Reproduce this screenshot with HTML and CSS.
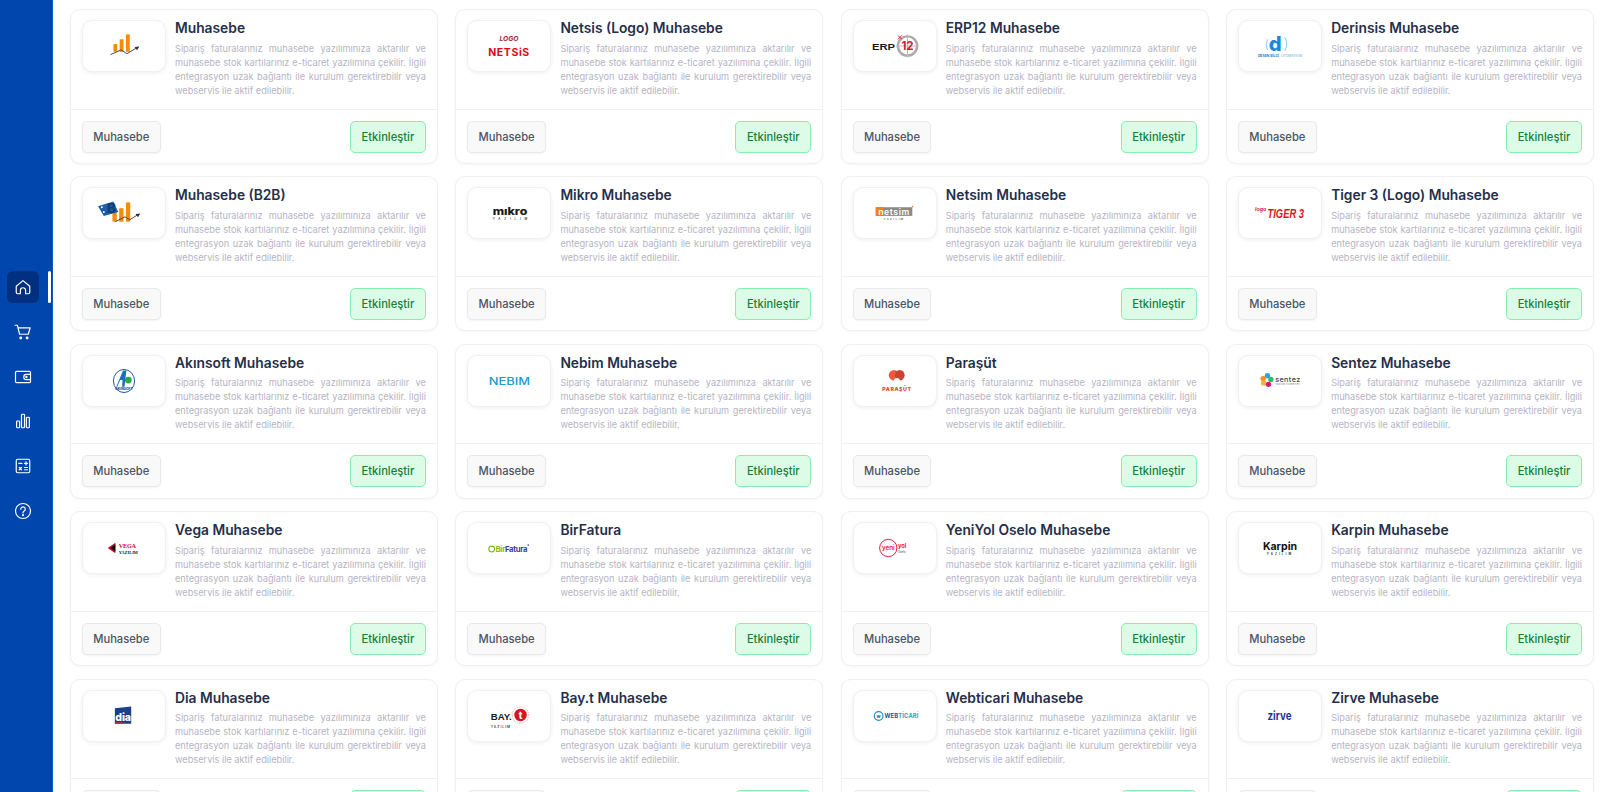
FILE: index.html
```html
<!DOCTYPE html>
<html lang="en">
<head>
    <meta charset="UTF-8">
    <meta name="viewport" content="width=device-width, initial-scale=1.0">
    <title>Entegrasyonlar</title>
    <link rel="stylesheet" href="styles.css">
</head>
<body>
    <aside class="sidebar">
        <a class="nav-item active">
            <svg viewBox="0 0 24 24"><path d="M3 11 12 3.500l9 7.500v8a2 2 0 0 1-2 2h-3.500v-4.500a3.500 3.500 0 0 0-7 0V21H5a2 2 0 0 1-2-2z"/></svg>
        </a>
        <a class="nav-item">
            <svg viewBox="0 0 24 24"><path d="M1.500 3h3l3 12h11.500l2.500-8.500H5.500"/><circle cx="9" cy="20" r="1.100"/><circle cx="17.500" cy="20" r="1.100"/></svg>
        </a>
        <a class="nav-item">
            <svg viewBox="0 0 24 24"><rect x="2" y="4.500" width="20" height="15" rx="1.500"/><path d="M22 8.500h-5.500a3.500 3.500 0 0 0 0 7H22"/><circle cx="16.500" cy="12" r=".8"/></svg>
        </a>
        <a class="nav-item">
            <svg viewBox="0 0 24 24"><rect x="3.500" y="12" width="4" height="9" rx="1"/><rect x="10" y="3" width="4" height="18" rx="1"/><rect x="16.500" y="7" width="4" height="14" rx="1"/></svg>
        </a>
        <a class="nav-item">
            <svg viewBox="0 0 24 24"><rect x="3" y="3" width="18" height="18" rx="2"/><path d="M6.500 8.500h4M14 8.500h4M16 6.500v4M7 14l3 3M10 14l-3 3M14 14h4M14 17h4"/></svg>
        </a>
        <a class="nav-item">
            <svg viewBox="0 0 24 24"><circle cx="12" cy="12" r="10"/><path d="M9 9.500a3 3 0 1 1 4.500 2.600c-1 .6-1.500 1.200-1.500 2.400"/><circle cx="12" cy="17.500" r=".6"/></svg>
        </a>
    </aside>

    <main class="content">
        <div class="card-grid">

            <div class="card">
                <div class="card-body">
                    <div class="logo-box">
                        <svg class="logo" viewBox="0 0 84 52">
                            <rect x="31" y="24" width="4" height="8" fill="#f28c0a"/><rect x="37.500" y="19" width="4" height="13" fill="#f28c0a"/><rect x="44" y="14" width="4" height="18" fill="#f28c0a"/>
                            <path d="M28 35 39 30l6 4 10-6" fill="none" stroke="#444" stroke-width="1"/><path d="M53 27l5-.5-2.500 4z" fill="#333"/>
                        </svg>
                    </div>
                    <div class="info">
                        <h3>Muhasebe</h3>
                        <p>Sipariş faturalarınız muhasebe yazılımınıza aktarılır ve muhasebe stok kartılarınız e-ticaret yazılımına çekilir. İlgili entegrasyon uzak bağlantı ile kurulum gerektirebilir veya webservis ile aktif edilebilir.</p>
                    </div>
                </div>
                <div class="card-foot"><span class="tag">Muhasebe</span><button class="enable">Etkinleştir</button></div>
            </div>

            <div class="card">
                <div class="card-body">
                    <div class="logo-box">
                        <svg class="logo" viewBox="0 0 84 52">
                            <text x="42" y="21" class="lt" font-size="7" font-weight="700" font-style="italic" fill="#a52a3a">LOGO</text>
                            <text x="42" y="36" class="lt" font-size="11" font-weight="700" fill="#e30613" letter-spacing=".6">NETSiS</text>
                        </svg>
                    </div>
                    <div class="info">
                        <h3>Netsis (Logo) Muhasebe</h3>
                        <p>Sipariş faturalarınız muhasebe yazılımınıza aktarılır ve muhasebe stok kartılarınız e-ticaret yazılımına çekilir. İlgili entegrasyon uzak bağlantı ile kurulum gerektirebilir veya webservis ile aktif edilebilir.</p>
                    </div>
                </div>
                <div class="card-foot"><span class="tag">Muhasebe</span><button class="enable">Etkinleştir</button></div>
            </div>

            <div class="card">
                <div class="card-body">
                    <div class="logo-box">
                        <svg class="logo" viewBox="0 0 84 52">
                            <text x="18" y="30.500" font-family="Liberation Sans" font-size="10" font-weight="700" fill="#1a1a1a" textLength="24" lengthAdjust="spacingAndGlyphs">ERP</text>
                            <circle cx="55" cy="26" r="10" fill="none" stroke="#aaa" stroke-width="2.500"/>
                            <path d="M55 14v24M43 26h24" stroke="#bbb" stroke-width="1"/>
                            <text x="55" y="30.500" class="lt" font-size="12" font-weight="700" fill="#d8232a">12</text>
                            <path d="M45 15l4 4M49 15l-4 4" stroke="#d8232a" stroke-width="1"/>
                        </svg>
                    </div>
                    <div class="info">
                        <h3>ERP12 Muhasebe</h3>
                        <p>Sipariş faturalarınız muhasebe yazılımınıza aktarılır ve muhasebe stok kartılarınız e-ticaret yazılımına çekilir. İlgili entegrasyon uzak bağlantı ile kurulum gerektirebilir veya webservis ile aktif edilebilir.</p>
                    </div>
                </div>
                <div class="card-foot"><span class="tag">Muhasebe</span><button class="enable">Etkinleştir</button></div>
            </div>

            <div class="card">
                <div class="card-body">
                    <div class="logo-box">
                        <svg class="logo" viewBox="0 0 84 52">
                            <text x="37" y="31" class="lt" font-size="21" font-weight="800" fill="#1e88d8">d</text>
                            <path d="M29 19a12 12 0 0 0 0 11M47 17a14 14 0 0 1 0 14" fill="none" stroke="#8cc0ea" stroke-width="1"/>
                            <text x="19" y="37" font-family="Inter" font-size="3.500" font-weight="700" fill="#1e78c8" textLength="22">DESEN BİLGİ</text>
                            <text x="43" y="37" font-family="Inter" font-size="3.500" fill="#6aaede" textLength="22">OTOMASYON</text>
                        </svg>
                    </div>
                    <div class="info">
                        <h3>Derinsis Muhasebe</h3>
                        <p>Sipariş faturalarınız muhasebe yazılımınıza aktarılır ve muhasebe stok kartılarınız e-ticaret yazılımına çekilir. İlgili entegrasyon uzak bağlantı ile kurulum gerektirebilir veya webservis ile aktif edilebilir.</p>
                    </div>
                </div>
                <div class="card-foot"><span class="tag">Muhasebe</span><button class="enable">Etkinleştir</button></div>
            </div>

            <div class="card">
                <div class="card-body">
                    <div class="logo-box">
                        <svg class="logo" viewBox="0 0 84 52">
                            <rect x="30" y="25" width="4.500" height="10" fill="#f28c0a"/><rect x="37" y="21" width="4.500" height="14" fill="#f28c0a"/><rect x="44" y="15" width="4.500" height="20" fill="#f28c0a"/>
                            <path d="M15 19l16-5 5 11-15 4z" fill="#1b5fa8"/>
                            <text x="29" y="26" class="lt" font-size="14" font-weight="800" fill="#123f78">B</text>
                            <circle cx="19" cy="20" r="1" fill="#fff"/><circle cx="21" cy="25" r="1" fill="#fff"/>
                            <path d="M33 35 43 30l5 3 8-5" fill="none" stroke="#444" stroke-width="1"/><path d="M54 27l5-.5-2.500 4z" fill="#333"/>
                        </svg>
                    </div>
                    <div class="info">
                        <h3>Muhasebe (B2B)</h3>
                        <p>Sipariş faturalarınız muhasebe yazılımınıza aktarılır ve muhasebe stok kartılarınız e-ticaret yazılımına çekilir. İlgili entegrasyon uzak bağlantı ile kurulum gerektirebilir veya webservis ile aktif edilebilir.</p>
                    </div>
                </div>
                <div class="card-foot"><span class="tag">Muhasebe</span><button class="enable">Etkinleştir</button></div>
            </div>

            <div class="card">
                <div class="card-body">
                    <div class="logo-box">
                        <svg class="logo" viewBox="0 0 84 52">
                            <text x="25" y="28.500" font-family="Inter" font-size="11" font-weight="800" fill="#1a1a1a" textLength="36" lengthAdjust="spacingAndGlyphs">mıkro</text>
                            <text x="25" y="33" font-family="Inter" font-size="3" font-weight="600" fill="#333" textLength="36">YAZILIM</text>
                        </svg>
                    </div>
                    <div class="info">
                        <h3>Mikro Muhasebe</h3>
                        <p>Sipariş faturalarınız muhasebe yazılımınıza aktarılır ve muhasebe stok kartılarınız e-ticaret yazılımına çekilir. İlgili entegrasyon uzak bağlantı ile kurulum gerektirebilir veya webservis ile aktif edilebilir.</p>
                    </div>
                </div>
                <div class="card-foot"><span class="tag">Muhasebe</span><button class="enable">Etkinleştir</button></div>
            </div>

            <div class="card">
                <div class="card-body">
                    <div class="logo-box">
                        <svg class="logo" viewBox="0 0 84 52">
                            <rect x="22" y="20" width="38" height="9" fill="#8a8a8a"/><rect x="22" y="20" width="8" height="9" fill="#f07f1e"/>
                            <text x="41" y="28" class="lt" font-size="9" font-weight="600" fill="#fff" letter-spacing=".6">netsim</text>
                            <rect x="59.500" y="18.500" width="1.500" height="1.500" fill="#f07f1e"/>
                            <text x="41" y="33" class="lt" font-size="2.800" font-weight="600" fill="#555" letter-spacing="1.500">YAZILIM</text>
                        </svg>
                    </div>
                    <div class="info">
                        <h3>Netsim Muhasebe</h3>
                        <p>Sipariş faturalarınız muhasebe yazılımınıza aktarılır ve muhasebe stok kartılarınız e-ticaret yazılımına çekilir. İlgili entegrasyon uzak bağlantı ile kurulum gerektirebilir veya webservis ile aktif edilebilir.</p>
                    </div>
                </div>
                <div class="card-foot"><span class="tag">Muhasebe</span><button class="enable">Etkinleştir</button></div>
            </div>

            <div class="card">
                <div class="card-body">
                    <div class="logo-box">
                        <svg class="logo" viewBox="0 0 84 52">
                            <text x="16" y="24" font-family="Inter" font-size="5.500" font-weight="700" font-style="italic" fill="#d8174f">logo</text>
                            <text x="29" y="31" font-family="Liberation Sans" font-size="12.500" font-weight="700" font-style="italic" fill="#d9142d" textLength="38" lengthAdjust="spacingAndGlyphs">TIGER 3</text>
                        </svg>
                    </div>
                    <div class="info">
                        <h3>Tiger 3 (Logo) Muhasebe</h3>
                        <p>Sipariş faturalarınız muhasebe yazılımınıza aktarılır ve muhasebe stok kartılarınız e-ticaret yazılımına çekilir. İlgili entegrasyon uzak bağlantı ile kurulum gerektirebilir veya webservis ile aktif edilebilir.</p>
                    </div>
                </div>
                <div class="card-foot"><span class="tag">Muhasebe</span><button class="enable">Etkinleştir</button></div>
            </div>

            <div class="card">
                <div class="card-body">
                    <div class="logo-box">
                        <svg class="logo" viewBox="0 0 84 52">
                            <ellipse cx="42" cy="26" rx="11" ry="12" fill="#fff" stroke="#1c4f9c" stroke-width="1"/>
                            <path d="M34 32 41 15h3.500l-2 17h-2.500l.5-7h-2.500l-3 7z" fill="#1c6fb5"/>
                            <circle cx="46.500" cy="25" r="3.500" fill="#2aa84a"/>
                            <text x="42" y="35.500" class="lt" font-size="3.500" font-weight="800" fill="#1c4f9c">AKINSOFT</text>
                        </svg>
                    </div>
                    <div class="info">
                        <h3>Akınsoft Muhasebe</h3>
                        <p>Sipariş faturalarınız muhasebe yazılımınıza aktarılır ve muhasebe stok kartılarınız e-ticaret yazılımına çekilir. İlgili entegrasyon uzak bağlantı ile kurulum gerektirebilir veya webservis ile aktif edilebilir.</p>
                    </div>
                </div>
                <div class="card-foot"><span class="tag">Muhasebe</span><button class="enable">Etkinleştir</button></div>
            </div>

            <div class="card">
                <div class="card-body">
                    <div class="logo-box">
                        <svg class="logo" viewBox="0 0 84 52">
                            <text x="21" y="30" font-family="Inter" font-size="10" font-weight="500" fill="#1b9ad6" textLength="43" lengthAdjust="spacingAndGlyphs">NEBIM</text>
                        </svg>
                    </div>
                    <div class="info">
                        <h3>Nebim Muhasebe</h3>
                        <p>Sipariş faturalarınız muhasebe yazılımınıza aktarılır ve muhasebe stok kartılarınız e-ticaret yazılımına çekilir. İlgili entegrasyon uzak bağlantı ile kurulum gerektirebilir veya webservis ile aktif edilebilir.</p>
                    </div>
                </div>
                <div class="card-foot"><span class="tag">Muhasebe</span><button class="enable">Etkinleştir</button></div>
            </div>

            <div class="card">
                <div class="card-body">
                    <div class="logo-box">
                        <svg class="logo" viewBox="0 0 84 52">
                            <ellipse cx="41" cy="20" rx="5.500" ry="5.500" fill="#ef5a3c"/>
                            <ellipse cx="47" cy="20" rx="5" ry="5.500" fill="#c9452f"/>
                            <path d="M41 26a3 3 0 0 1 6 0z" fill="#fff"/>
                            <text x="44" y="36" class="lt" font-size="5.500" font-weight="800" fill="#d9432f" letter-spacing=".6">PARAŞÜT</text>
                        </svg>
                    </div>
                    <div class="info">
                        <h3>Paraşüt</h3>
                        <p>Sipariş faturalarınız muhasebe yazılımınıza aktarılır ve muhasebe stok kartılarınız e-ticaret yazılımına çekilir. İlgili entegrasyon uzak bağlantı ile kurulum gerektirebilir veya webservis ile aktif edilebilir.</p>
                    </div>
                </div>
                <div class="card-foot"><span class="tag">Muhasebe</span><button class="enable">Etkinleştir</button></div>
            </div>

            <div class="card">
                <div class="card-body">
                    <div class="logo-box">
                        <svg class="logo" viewBox="0 0 84 52">
                            <circle cx="29" cy="20.500" r="2.800" fill="#2aa7c9"/><circle cx="24.500" cy="23.500" r="2.800" fill="#f28c2a"/><circle cx="32.500" cy="24.500" r="2.800" fill="#3cb56b"/><circle cx="25" cy="28" r="2.800" fill="#f2b53a"/><circle cx="30" cy="29.500" r="2.800" fill="#d81b7a"/>
                            <text x="37" y="27" font-family="Inter" font-size="7.500" font-weight="500" fill="#444" textLength="26">sentez</text>
                            <text x="37" y="30.500" font-family="Inter" font-size="2.500" fill="#777" textLength="26">Yazılım Hizmetleri</text>
                        </svg>
                    </div>
                    <div class="info">
                        <h3>Sentez Muhasebe</h3>
                        <p>Sipariş faturalarınız muhasebe yazılımınıza aktarılır ve muhasebe stok kartılarınız e-ticaret yazılımına çekilir. İlgili entegrasyon uzak bağlantı ile kurulum gerektirebilir veya webservis ile aktif edilebilir.</p>
                    </div>
                </div>
                <div class="card-foot"><span class="tag">Muhasebe</span><button class="enable">Etkinleştir</button></div>
            </div>

            <div class="card">
                <div class="card-body">
                    <div class="logo-box">
                        <svg class="logo" viewBox="0 0 84 52">
                            <path d="M25 26l8-5.500v11z" fill="#c8102e"/>
                            <path d="M28 26l5-4v8z" fill="#111"/>
                            <text x="36.500" y="26.500" font-family="Liberation Serif" font-size="6.500" font-weight="700" fill="#c8102e" textLength="18">VEGA</text>
                            <text x="36.500" y="32" font-family="Liberation Serif" font-size="4.500" font-weight="700" fill="#222" textLength="20">YAZILIM</text>
                        </svg>
                    </div>
                    <div class="info">
                        <h3>Vega Muhasebe</h3>
                        <p>Sipariş faturalarınız muhasebe yazılımınıza aktarılır ve muhasebe stok kartılarınız e-ticaret yazılımına çekilir. İlgili entegrasyon uzak bağlantı ile kurulum gerektirebilir veya webservis ile aktif edilebilir.</p>
                    </div>
                </div>
                <div class="card-foot"><span class="tag">Muhasebe</span><button class="enable">Etkinleştir</button></div>
            </div>

            <div class="card">
                <div class="card-body">
                    <div class="logo-box">
                        <svg class="logo" viewBox="0 0 84 52">
                            <circle cx="24" cy="27" r="3" fill="none" stroke="#7fb82a" stroke-width="1.200"/>
                            <text x="28" y="30" font-family="Inter" font-size="8" font-weight="700" fill="#3d3a9e" letter-spacing="-.3"><tspan fill="#7fb82a">Bir</tspan>Fatura</text>
                            <circle cx="62" cy="23" r=".8" fill="#3d3a9e"/>
                        </svg>
                    </div>
                    <div class="info">
                        <h3>BirFatura</h3>
                        <p>Sipariş faturalarınız muhasebe yazılımınıza aktarılır ve muhasebe stok kartılarınız e-ticaret yazılımına çekilir. İlgili entegrasyon uzak bağlantı ile kurulum gerektirebilir veya webservis ile aktif edilebilir.</p>
                    </div>
                </div>
                <div class="card-foot"><span class="tag">Muhasebe</span><button class="enable">Etkinleştir</button></div>
            </div>

            <div class="card">
                <div class="card-body">
                    <div class="logo-box">
                        <svg class="logo" viewBox="0 0 84 52">
                            <circle cx="35" cy="26" r="9" fill="none" stroke="#e3173e" stroke-width="1"/>
                            <text x="35" y="28.500" class="lt" font-size="6.500" font-weight="600" fill="#e3173e">yeni</text>
                            <text x="45" y="26" font-family="Inter" font-size="6" font-weight="700" fill="#e3173e">yol</text>
                            <text x="45" y="31" font-family="Inter" font-size="3" fill="#444">Oselo</text>
                        </svg>
                    </div>
                    <div class="info">
                        <h3>YeniYol Oselo Muhasebe</h3>
                        <p>Sipariş faturalarınız muhasebe yazılımınıza aktarılır ve muhasebe stok kartılarınız e-ticaret yazılımına çekilir. İlgili entegrasyon uzak bağlantı ile kurulum gerektirebilir veya webservis ile aktif edilebilir.</p>
                    </div>
                </div>
                <div class="card-foot"><span class="tag">Muhasebe</span><button class="enable">Etkinleştir</button></div>
            </div>

            <div class="card">
                <div class="card-body">
                    <div class="logo-box">
                        <svg class="logo" viewBox="0 0 84 52">
                            <text x="42" y="28" class="lt" font-size="11" font-weight="700" fill="#111">Karpin</text>
                            <text x="42" y="33" class="lt" font-size="3" font-weight="700" fill="#333" letter-spacing="2.200">YAZILIM</text>
                        </svg>
                    </div>
                    <div class="info">
                        <h3>Karpin Muhasebe</h3>
                        <p>Sipariş faturalarınız muhasebe yazılımınıza aktarılır ve muhasebe stok kartılarınız e-ticaret yazılımına çekilir. İlgili entegrasyon uzak bağlantı ile kurulum gerektirebilir veya webservis ile aktif edilebilir.</p>
                    </div>
                </div>
                <div class="card-foot"><span class="tag">Muhasebe</span><button class="enable">Etkinleştir</button></div>
            </div>

            <div class="card">
                <div class="card-body">
                    <div class="logo-box">
                        <svg class="logo" viewBox="0 0 84 52">
                            <path d="M32.500 18l17-2v18h-17z" fill="#1b3f8b"/>
                            <rect x="32.500" y="32.500" width="8" height="1.500" fill="#d8232a"/>
                            <text x="41" y="31" class="lt" font-size="11" font-weight="800" fill="#fff" letter-spacing="-.2">dia</text>
                        </svg>
                    </div>
                    <div class="info">
                        <h3>Dia Muhasebe</h3>
                        <p>Sipariş faturalarınız muhasebe yazılımınıza aktarılır ve muhasebe stok kartılarınız e-ticaret yazılımına çekilir. İlgili entegrasyon uzak bağlantı ile kurulum gerektirebilir veya webservis ile aktif edilebilir.</p>
                    </div>
                </div>
                <div class="card-foot"><span class="tag">Muhasebe</span><button class="enable">Etkinleştir</button></div>
            </div>

            <div class="card">
                <div class="card-body">
                    <div class="logo-box">
                        <svg class="logo" viewBox="0 0 84 52">
                            <text x="23" y="30" font-family="Liberation Sans" font-size="10" font-weight="700" fill="#1a1a1a">BAY.</text>
                            <circle cx="54" cy="25" r="6.500" fill="#d8141f"/>
                            <circle cx="54" cy="25" r="8.500" fill="none" stroke="#e88a8f" stroke-width=".8" stroke-dasharray="1 1"/>
                            <text x="54" y="29" class="lt" font-size="10" font-weight="800" fill="#fff">t</text>
                            <text x="23" y="38" font-family="Inter" font-size="3.500" font-weight="600" fill="#444" letter-spacing="1">YAZILIM</text>
                        </svg>
                    </div>
                    <div class="info">
                        <h3>Bay.t Muhasebe</h3>
                        <p>Sipariş faturalarınız muhasebe yazılımınıza aktarılır ve muhasebe stok kartılarınız e-ticaret yazılımına çekilir. İlgili entegrasyon uzak bağlantı ile kurulum gerektirebilir veya webservis ile aktif edilebilir.</p>
                    </div>
                </div>
                <div class="card-foot"><span class="tag">Muhasebe</span><button class="enable">Etkinleştir</button></div>
            </div>

            <div class="card">
                <div class="card-body">
                    <div class="logo-box">
                        <svg class="logo" viewBox="0 0 84 52">
                            <circle cx="25" cy="26" r="4.500" fill="none" stroke="#1b8fb8" stroke-width="1.200"/>
                            <text x="25" y="28" class="lt" font-size="5" font-weight="700" fill="#1b5f9c">w</text>
                            <text x="31" y="28.500" font-family="Inter" font-size="6" font-weight="700" fill="#1b4f9c" letter-spacing=".2">WEB<tspan fill="#2aa0c8">TİCARİ</tspan></text>
                        </svg>
                    </div>
                    <div class="info">
                        <h3>Webticari Muhasebe</h3>
                        <p>Sipariş faturalarınız muhasebe yazılımınıza aktarılır ve muhasebe stok kartılarınız e-ticaret yazılımına çekilir. İlgili entegrasyon uzak bağlantı ile kurulum gerektirebilir veya webservis ile aktif edilebilir.</p>
                    </div>
                </div>
                <div class="card-foot"><span class="tag">Muhasebe</span><button class="enable">Etkinleştir</button></div>
            </div>

            <div class="card">
                <div class="card-body">
                    <div class="logo-box">
                        <svg class="logo" viewBox="0 0 84 52">
                            <text x="29" y="30" font-family="Inter" font-size="12" font-weight="700" fill="#24339a" textLength="25" lengthAdjust="spacingAndGlyphs">zirve</text>
                        </svg>
                    </div>
                    <div class="info">
                        <h3>Zirve Muhasebe</h3>
                        <p>Sipariş faturalarınız muhasebe yazılımınıza aktarılır ve muhasebe stok kartılarınız e-ticaret yazılımına çekilir. İlgili entegrasyon uzak bağlantı ile kurulum gerektirebilir veya webservis ile aktif edilebilir.</p>
                    </div>
                </div>
                <div class="card-foot"><span class="tag">Muhasebe</span><button class="enable">Etkinleştir</button></div>
            </div>

        </div>
    </main>
</body>
</html>
```

FILE: styles.css
```css
* {
    margin: 0;
    padding: 0;
    box-sizing: border-box;
}

body {
    display: flex;
    height: 100vh;
    overflow: hidden;
    background: #fff;
    font-family: 'Inter', 'Liberation Sans', sans-serif;
}

.sidebar {
    flex: 0 0 52.5px;
    display: flex;
    flex-direction: column;
    align-items: flex-start;
    justify-content: center;
    gap: 12.9px;
    padding: 6px 0 0 6.5px;
    background: #0046ad;
    border-right: 1px solid #1558bd;
}

.nav-item {
    position: relative;
    display: flex;
    align-items: center;
    justify-content: center;
    width: 32px;
    height: 32px;
    border-radius: 6px;
}

.nav-item svg {
    width: 18px;
    height: 18px;
    fill: none;
    stroke: #fff;
    stroke-width: 1.6;
    stroke-linecap: round;
    stroke-linejoin: round;
}

.nav-item.active {
    background: #00307f;
}

.nav-item.active::after {
    content: '';
    position: absolute;
    left: 41.5px;
    top: 0;
    width: 2.5px;
    height: 32px;
    border-radius: 2px;
    background: #fff;
}

.content {
    flex: 1;
    min-width: 0;
    padding: 9px 6px 0 17.5px;
}

.card-grid {
    display: grid;
    grid-template-columns: repeat(4, 1fr);
    column-gap: 17.5px;
    row-gap: 12.4px;
}

.card {
    height: 155px;
    background: #fff;
    border: 1px solid #eff0f4;
    border-radius: 10px;
    box-shadow: 0 1px 3px rgba(0, 0, 0, 0.04);
}

.card-body {
    display: flex;
    gap: 9px;
    height: 99.5px;
    padding: 10px 11px 0;
    border-bottom: 1px solid #eff0f4;
}

.logo-box {
    flex: 0 0 84px;
    height: 52px;
    background: #fff;
    border: 1px solid #f1f1f4;
    border-radius: 10px;
    box-shadow: 0 1px 4px rgba(0, 0, 0, 0.07);
    overflow: hidden;
}

.logo {
    display: block;
    width: 100%;
    height: 100%;
}

.lt {
    font-family: 'Inter', sans-serif;
    text-anchor: middle;
}

.info {
    flex: 1;
    min-width: 0;
}

.info h3 {
    font-size: 13.8px;
    font-weight: 600;
    line-height: 17px;
    color: #252f4a;
    margin-bottom: 4.5px;
}

.info p {
    font-size: 9.2px;
    line-height: 14px;
    color: #b5b5c3;
    text-align: justify;
}

.card-foot {
    display: flex;
    justify-content: space-between;
    align-items: center;
    padding: 11px 11px 0;
}

.tag,
.enable {
    display: flex;
    align-items: center;
    justify-content: center;
    height: 32px;
    font-family: inherit;
    font-size: 11.2px;
    font-weight: 500;
    border-radius: 5px;
}

.tag {
    width: 78.5px;
    color: #4b5563;
    background: #f9f9f9;
    border: 1px solid #e9e9ec;
    box-shadow: 0 1px 2px rgba(0, 0, 0, 0.05);
}

.enable {
    width: 76px;
    color: #15803d;
    background: #dcfce7;
    border: 1px solid #86efac;
}
```
